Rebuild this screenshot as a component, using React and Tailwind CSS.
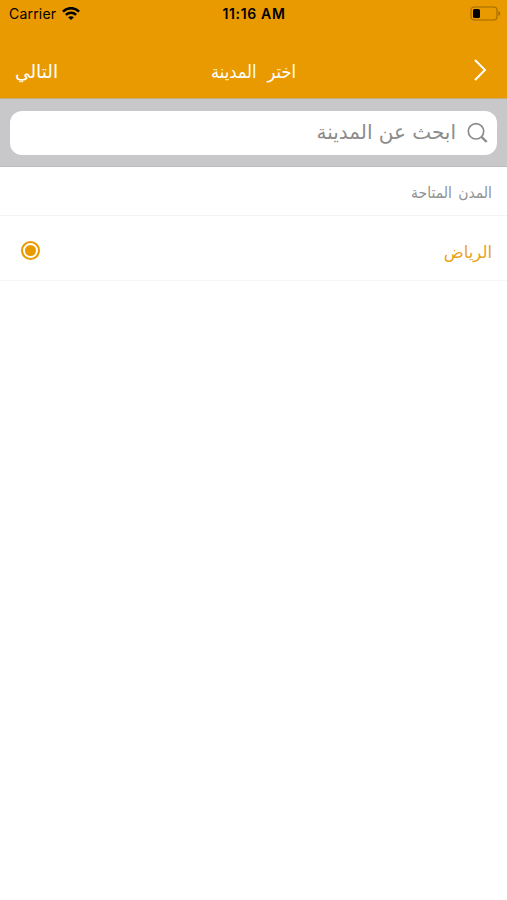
const cities = [{ id: 1, name: "الرياض", selected: true }];

function StatusBar() {
  return (
    <div dir="ltr" className="grid grid-cols-3 items-center h-7 pl-[9px] pr-[6px] text-black font-['Inter',sans-serif]">
      <div className="flex items-center gap-[6px] -mt-[1px]">
        <span className="text-[14px] tracking-[0.2px] leading-none">Carrier</span>
        <svg width="18" height="13" viewBox="0 0 18 13" fill="none" stroke="currentColor" strokeWidth="2.5">
          <path d="M0.9 4.6C5.4 0 12.6 0 17.1 4.6" />
          <path d="M3.9 7.8C6.8 5 11.2 5 14.1 7.8" />
          <path d="M9 13L6.1 10.3C7.8 8.8 10.2 8.8 11.9 10.3Z" fill="currentColor" stroke="none" />
        </svg>
      </div>
      <span className="text-center text-[14px] font-semibold leading-none tracking-[0.65px] pr-[2px] whitespace-nowrap">11:16 AM</span>
      <svg className="justify-self-end -mt-[2px]" width="31" height="15" viewBox="0 0 31 15" fill="none">
        <rect x="1" y="1" width="26" height="13" rx="3.2" stroke="#a06a00" strokeWidth="1.1" />
        <rect x="3" y="3" width="7" height="9" rx="1.6" fill="#000" />
        <path d="M28.4 5v5c2.3-.8 2.3-4.2 0-5z" fill="#a06a00" />
      </svg>
    </div>
  );
}

function NavBar() {
  return (
    <div className="grid grid-cols-3 items-center h-[70px] pt-[16px] pr-[20px] pl-[15px] text-white">
      <button className="justify-self-start -mt-[2px]" aria-label="رجوع">
        <svg width="14" height="24" viewBox="0 0 14 24" fill="none" stroke="currentColor" strokeWidth="2">
          <path d="M2 2L12 12L2 22" />
        </svg>
      </button>
      <h1 className="text-center text-[18px] leading-6 pt-[2px] pl-[5px] whitespace-nowrap font-['DejaVu_Sans_Condensed','DejaVu_Sans',sans-serif] [font-stretch:condensed] [word-spacing:6px]">
        اختر المدينة
      </h1>
      <button className="justify-self-end text-[18.5px] leading-6 pt-[2px]">التالي</button>
    </div>
  );
}

function SearchIcon() {
  return (
    <svg width="22" height="22" viewBox="0 0 22 22" fill="none" stroke="currentColor">
      <circle cx="10" cy="9.3" r="7.7" strokeWidth="1.7" />
      <path d="M15.5 14.8L20.7 20" strokeWidth="2.4" />
    </svg>
  );
}

function Radio({ checked }) {
  return (
    <span className="flex items-center justify-center size-[19px] rounded-full border-[2.5px] border-[#e99a00]">
      {checked && <span className="size-[11px] rounded-full bg-[#e99a00]" />}
    </span>
  );
}

export default function App() {
  return (
    <div dir="rtl" className="flex flex-col h-[900px] bg-white font-['DejaVu_Sans',sans-serif]">
      <header className="h-[98px] bg-[#e99a00]">
        <StatusBar />
        <NavBar />
      </header>

      <div className="h-[69px] pt-[12px] px-[10px] bg-[#c8c8ca] border-t border-t-[#c3ac78] border-b border-b-[#bcbcbe]">
        <div className="flex items-center h-[44px] pr-[9px] gap-[10px] rounded-xl bg-white text-[#8c8c8c]">
          <SearchIcon />
          <span className="text-[20px] leading-7 pb-[2px]">ابحث عن المدينة</span>
        </div>
      </div>

      <h2 className="flex items-center h-[49px] pt-[6px] px-[15px] text-[15.5px] text-[#929292] border-b border-[#f3f3f3] font-['DejaVu_Sans_Condensed','DejaVu_Sans',sans-serif] [font-stretch:condensed] [word-spacing:2px]">
        المدن المتاحة
      </h2>

      <ul>
        {cities.map((city) => (
          <li key={city.id} className="flex items-center justify-between h-[65px] pt-[4px] pr-[15px] pl-[21px] border-b border-[#f5f5f5] text-[#e9a320]">
            <span className="text-[16.5px] pt-[6px]">{city.name}</span>
            <Radio checked={city.selected} />
          </li>
        ))}
      </ul>
    </div>
  );
}
